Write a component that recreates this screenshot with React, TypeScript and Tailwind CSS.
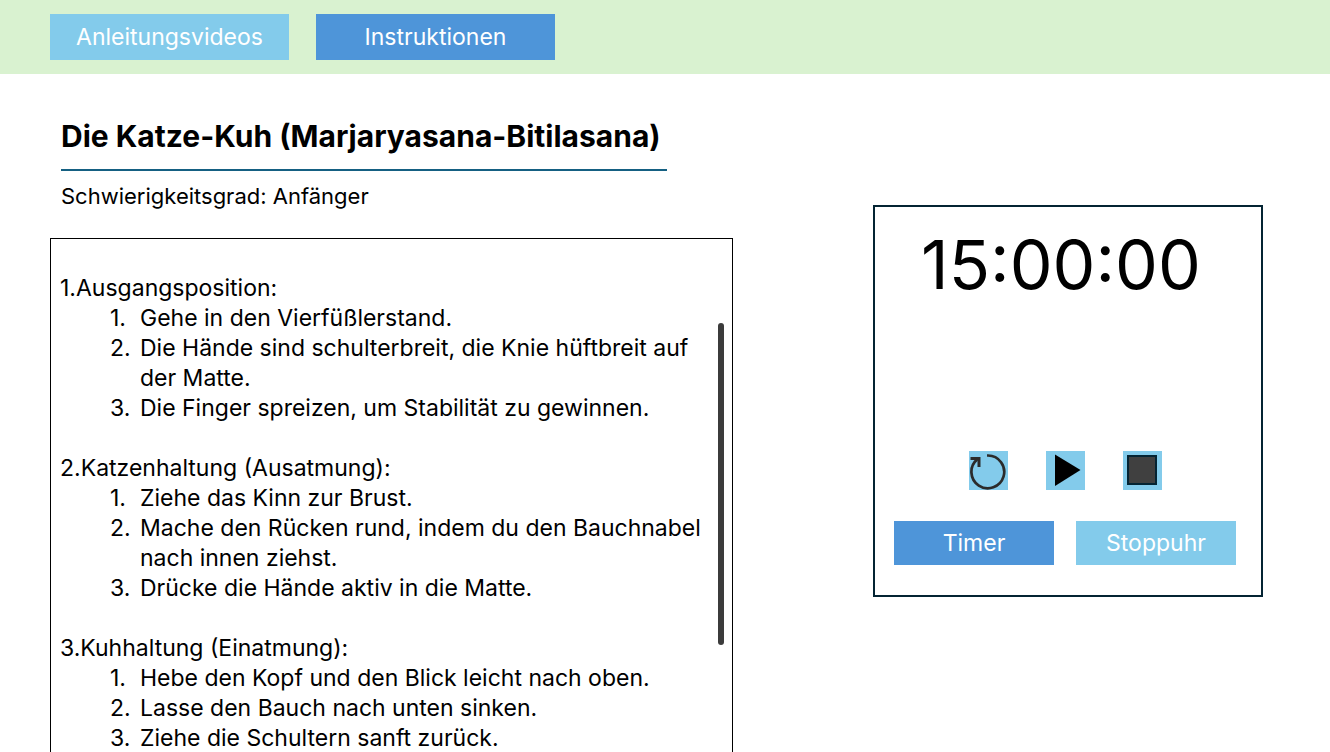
import { useState } from "react";

type Step = { title: string; items: string[] };

const steps: Step[] = [
  {
    title: "Ausgangsposition:",
    items: [
      "Gehe in den Vierfüßlerstand.",
      "Die Hände sind schulterbreit, die Knie hüftbreit auf der Matte.",
      "Die Finger spreizen, um Stabilität zu gewinnen.",
    ],
  },
  {
    title: "Katzenhaltung (Ausatmung):",
    items: [
      "Ziehe das Kinn zur Brust.",
      "Mache den Rücken rund, indem du den Bauchnabel nach innen ziehst.",
      "Drücke die Hände aktiv in die Matte.",
    ],
  },
  {
    title: "Kuhhaltung (Einatmung):",
    items: [
      "Hebe den Kopf und den Blick leicht nach oben.",
      "Lasse den Bauch nach unten sinken.",
      "Ziehe die Schultern sanft zurück.",
    ],
  },
];

function Header() {
  return (
    <header className="shrink-0 bg-[#d9f2d0] py-[14px] pl-[50px]">
      <nav className="flex gap-[27px]">
        <button type="button" className="h-[46px] w-[239px] bg-[#83cbeb] text-white">
          Anleitungsvideos
        </button>
        <button type="button" className="h-[46px] w-[239px] bg-[#4e95d9] text-white">
          Instruktionen
        </button>
      </nav>
    </header>
  );
}

function Instructions() {
  return (
    <div className="relative mt-[27px] min-h-0 flex-1 border border-b-0 border-black">
      <ol className="h-full overflow-y-auto pt-[34px] pr-[20px] pl-[9px] leading-[30px] [scrollbar-width:none]">
        {steps.map((step, i) => (
          <li key={step.title} className="mb-[30px]">
            <h2>
              {i + 1}.{step.title}
            </h2>
            <ol>
              {step.items.map((item, n) => (
                <li key={item} className="flex pl-[50px]">
                  <span className="w-[30px] shrink-0">{n + 1}.</span>
                  <span>{item}</span>
                </li>
              ))}
            </ol>
          </li>
        ))}
      </ol>
      <div className="absolute top-[84px] right-[8px] h-[322px] w-[6px] rounded-full bg-[#3b3b3b]" />
    </div>
  );
}

function TimerCard() {
  const [mode, setMode] = useState("Timer");
  return (
    <aside className="mt-[131px] flex h-[392px] w-[390px] shrink-0 flex-col items-center border-2 border-[#042433] pr-[25px] pb-[30px] pl-[19px]">
      <time className="mt-[12px] pr-2 text-[68px] leading-[90px]">15:00:00</time>
      <div className="mt-auto flex gap-[38px]">
        <button type="button" aria-label="Zurücksetzen" className="size-[39px] bg-[#83cbeb]">
          <svg viewBox="0 0 39 39" className="size-full" fill="none" stroke="#2b2b2b" strokeWidth="2.7">
            <path d="M18 4.5H19A16.4 16.4 0 1 1 8.2 8.4" />
            <path d="M1.5 7.6H10V16" strokeWidth="3" />
          </svg>
        </button>
        <button type="button" aria-label="Start" className="size-[39px] bg-[#83cbeb]">
          <svg viewBox="0 0 39 39" className="size-full">
            <path d="M9 3.5L34.5 19L9 35Z" fill="#000" />
          </svg>
        </button>
        <button type="button" aria-label="Stopp" className="size-[39px] bg-[#83cbeb]">
          <svg viewBox="0 0 39 39" className="size-full">
            <rect x="5" y="5" width="28" height="28" fill="#404040" stroke="#042433" strokeWidth="2" />
          </svg>
        </button>
      </div>
      <div className="mt-[31px] flex gap-[22px]">
        <button
          type="button"
          onClick={() => setMode("Timer")}
          className={`h-[44px] w-[160px] text-white ${mode === "Timer" ? "bg-[#4e95d9]" : "bg-[#83cbeb]"}`}
        >
          Timer
        </button>
        <button
          type="button"
          onClick={() => setMode("Stoppuhr")}
          className={`h-[44px] w-[160px] text-white ${mode === "Stoppuhr" ? "bg-[#4e95d9]" : "bg-[#83cbeb]"}`}
        >
          Stoppuhr
        </button>
      </div>
    </aside>
  );
}

export default function App() {
  return (
    <div className="flex h-screen flex-col bg-white font-['Inter','Noto_Sans',sans-serif] text-[23px] text-black">
      <Header />
      <main className="flex min-h-0 flex-1 gap-[140px] pr-[67px] pl-[50px]">
        <section className="flex min-w-0 flex-1 flex-col pt-[42px]">
          <div className="w-[617px] max-w-full pl-[11px]">
            <h1 className="border-b-2 border-[#156082] pb-[13px] text-[30px] leading-[40px] font-bold whitespace-nowrap">
              Die Katze-Kuh (Marjaryasana-Bitilasana)
            </h1>
            <p className="mt-[10px] text-[22px] leading-[30px]">Schwierigkeitsgrad: Anfänger</p>
          </div>
          <Instructions />
        </section>
        <TimerCard />
      </main>
    </div>
  );
}
